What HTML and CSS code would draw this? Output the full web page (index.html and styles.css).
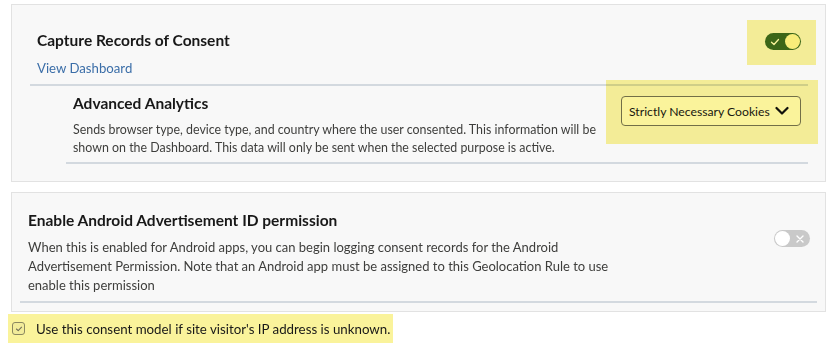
FILE: index.html
```html
<!DOCTYPE html>
<html lang="en">
<head>
<meta charset="utf-8">
<title>Consent settings</title>
<link rel="stylesheet" href="styles.css">
</head>
<body>
<main class="page">
  <section class="card card-consent">
    <div class="head">
      <div class="head-text">
        <h2 class="title">Capture Records of Consent</h2>
        <a class="link" href="#">View Dashboard</a>
      </div>
      <div class="toggle-wrap">
        <span class="hl hl-toggle"></span>
        <span class="toggle toggle-on">
          <svg class="toggle-check" viewBox="0 0 10 10" width="10" height="10"><path d="M1.5 5.2 L4 7.5 L8.5 2.5" fill="none" stroke="#fff" stroke-width="1.3" stroke-linecap="round" stroke-linejoin="round"/></svg>
          <span class="knob"></span>
        </span>
      </div>
    </div>
    <div class="sub">
      <div class="sub-text">
        <h3 class="sub-title">Advanced Analytics</h3>
        <p class="desc desc-sub">Sends browser type, device type, and country where the user consented. This information will be shown on the Dashboard. This data will only be sent when the selected purpose is active.</p>
      </div>
      <div class="dd-wrap">
        <span class="hl hl-dd"></span>
        <button class="dd" type="button"><span class="dd-label">Strictly Necessary Cookies</span>
          <svg class="chev" viewBox="0 0 14 10" width="14" height="10"><path d="M1.5 2 L7 7.5 L12.5 2" fill="none" stroke="#111" stroke-width="2.2" stroke-linecap="round" stroke-linejoin="round"/></svg>
        </button>
      </div>
    </div>
  </section>

  <section class="card card-android">
    <div class="android">
      <div class="android-text">
        <h2 class="title">Enable Android Advertisement ID permission</h2>
        <p class="desc desc-android">When this is enabled for Android apps, you can begin logging consent records for the Android Advertisement Permission. Note that an Android app must be assigned to this Geolocation Rule to use enable this permission</p>
      </div>
      <span class="toggle toggle-off">
        <span class="knob"></span>
        <svg class="toggle-x" viewBox="0 0 10 10" width="10" height="10"><path d="M2 2 L8 8 M8 2 L2 8" fill="none" stroke="#fff" stroke-width="1.4" stroke-linecap="round"/></svg>
      </span>
    </div>
  </section>

  <label class="check-row">
    <span class="checkbox">
      <svg viewBox="0 0 10 10" width="8" height="8"><path d="M1.8 5 L4 7 L8.2 2.8" fill="none" stroke="#6e6c55" stroke-width="1.3" stroke-linecap="round" stroke-linejoin="round"/></svg>
    </span>
    <span class="check-label">Use this consent model if site visitor's IP address is unknown.</span>
  </label>
</main>
</body>
</html>
```

FILE: styles.css
```css
* { box-sizing: border-box; }
html, body { margin: 0; padding: 0; background: #fff; }
body {
  font-family: "Lato", "Noto Sans", sans-serif;
  color: #181818;
}
.page { padding: 4px 0 0 11px; width: 826px; }

.card {
  background: #f8f8f8;
  border: 1px solid #e2e2e2;
  width: 815px;
}
.card-consent { padding: 25px 17px 17px 18px; }

.head {
  display: flex;
  justify-content: space-between;
  align-items: flex-start;
  padding: 0 7px 6px 7px;
  border-bottom: 2px solid #d3d9df;
}
.title {
  margin: 0;
  font-size: 15.5px;
  line-height: 20px;
  font-weight: 700;
  color: #181818;
}
.link {
  display: block;
  margin-top: 8px;
  font-size: 13.2px;
  line-height: 20px;
  color: #3b6ea8;
  text-decoration: none;
}
.toggle-wrap { position: relative; margin-top: 3px; }
.hl {
  position: absolute;
  background: #faf39b;
  mix-blend-mode: multiply;
  pointer-events: none;
}
.hl-toggle { top: -13px; right: -15px; bottom: -15px; left: -18px; }

.toggle {
  display: flex;
  align-items: center;
  justify-content: space-between;
  flex-shrink: 0;
  width: 36px;
  height: 17px;
  border-radius: 9px;
}
.toggle-on { background: #3d6b27; padding: 0 1px 0 5px; }
.toggle-off { background: #c9c9c9; padding: 0 5px 0 1px; margin-top: 20px; }
.toggle svg { flex-shrink: 0; }
.knob {
  flex-shrink: 0;
  width: 15px; height: 15px; border-radius: 50%;
  background: #fff;
}
.toggle-on .knob { background: #fdf9c7; }

.sub {
  margin-left: 36px;
  display: flex;
  justify-content: space-between;
  align-items: flex-start;
  padding: 7px 7px 6px 7px;
  border-bottom: 2px solid #d3d9df;
}
.sub-title {
  margin: 0;
  font-size: 15.5px;
  line-height: 20px;
  font-weight: 700;
}
.desc {
  margin: 8px 0 0;
  color: #3e3e3c;
}
.desc-sub { font-size: 12.4px; line-height: 17.5px; width: 535px; }

.dd-wrap { position: relative; margin-top: 3px; }
.hl-dd { top: -16px; right: -17px; bottom: -18px; left: -15px; }
.dd {
  display: flex;
  align-items: center;
  height: 30px;
  width: 180px;
  padding: 0 11px 0 7px;
  border: 1px solid #747474;
  border-radius: 4px;
  background: #fff;
  font-family: inherit;
  font-size: 12.2px;
  color: #181818;
  white-space: nowrap;
}
.chev { margin-left: auto; flex-shrink: 0; }

.card-android { margin-top: 10px; padding: 17px 8px 8px 8px; }
.android {
  display: flex;
  justify-content: space-between;
  align-items: flex-start;
  padding: 0 7px 6px 8px;
  border-bottom: 2px solid #d3d9df;
}
.desc-android { font-size: 13px; line-height: 19px; width: 590px; }

.check-row {
  display: flex;
  align-items: center;
  gap: 11px;
  width: 385px;
  height: 29px;
  margin: 2px 0 0 -3px;
  padding: 0 4px;
  background: #faf39b;
  white-space: nowrap;
}
.checkbox {
  display: flex;
  align-items: center;
  justify-content: center;
  flex-shrink: 0;
  width: 13px; height: 13px;
  border: 1px solid #8b8860;
  border-radius: 3px;
  background: #f2ec9a;
}
.check-label { font-size: 13.3px; color: #181818; }
```
